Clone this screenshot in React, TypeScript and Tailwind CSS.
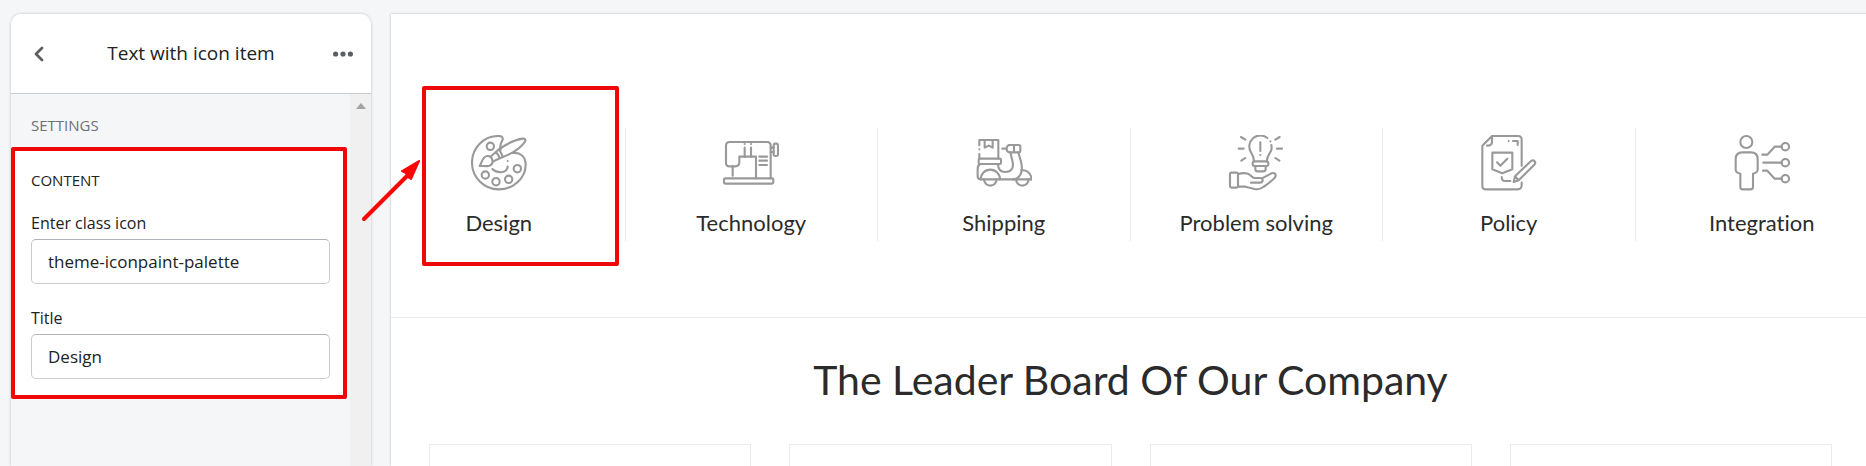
import type { ReactNode } from "react";

const features: { title: string; icon: ReactNode; highlighted?: boolean }[] = [
  {
    title: "Design",
    highlighted: true,
    icon: (
      <>
        <path d="M89 44C84 32 91 24 95 14C97 6 91 3 82 3C38 3 3 38 3 83C3 127 39 163 83 163C128 163 164 128 164 90C164 64 148 52 126 54" />
        <path d="M84 43C104 29 130 14 155 11C163 10 166 15 160 23C143 45 118 58 95 66" />
        <path d="M60 64L84 43Q92 54 95 66L65 80M75 51Q83 60 86 70" />
        <path d="M26 93C33 84 34 63 49 63C65 63 70 84 58 91C50 96 37 92 26 93Z" />
        <circle cx="58" cy="34" r="11" />
        <circle cx="43" cy="120" r="11" />
        <circle cx="75" cy="140" r="11" />
        <circle cx="113" cy="133" r="11" />
        <circle cx="139" cy="101" r="11" />
        <path d="M64 102C78 116 108 116 110 95M110 78V78.1" />
      </>
    ),
  },
  {
    title: "Technology",
    icon: (
      <>
        <path d="M143 130V32Q143 21 132 21H20Q9 21 9 32V83Q9 94 20 94H37Q49 94 49 82V65H99V130" />
        <rect x="3" y="130" width="148" height="16" rx="4" />
        <path d="M29 94V122M65 38V65M84 38V65M65 27V27.1M84 27V27.1M109 65H132M109 77H132M109 90H132" />
        <rect x="152" y="26" width="13" height="37" rx="5" />
        <path d="M143 38H152M143 51H152" />
      </>
    ),
  },
  {
    title: "Shipping",
    icon: (
      <>
        <path d="M10 31V15H67V71M10 57V71M10 43V43.1M26 15V38L38 32L50 38V15" />
        <rect x="8" y="71" width="67" height="16" rx="4" />
        <path d="M13 87Q5 90 5 102V124Q5 133 14 133H167" />
        <path d="M14 133A29 29 0 0 1 72 133M24 133A19 19 0 0 0 62 133" />
        <path d="M120 133A19 19 0 0 0 158 133M136 105Q163 105 167 133" />
        <path d="M66 87C66 103 75 111 88 111C108 111 113 96 110 82L103 52M127 52L136 84C141 110 134 132 110 133" />
        <path d="M98 30H128Q133 30 133 35V47Q133 52 128 52H104Q92 52 92 41Q92 30 102 30M114 30V52M79 41H92" />
      </>
    ),
  },
  {
    title: "Problem solving",
    icon: (
      <>
        <path d="M118 9A33 33 0 0 0 69 52C75 62 78 67 78 79M116 79C117 67 120 62 126 53Q133 44 130 30M127 19V19.1" />
        <rect x="74" y="79" width="47" height="14" rx="6" />
        <path d="M82 93V102Q82 109 89 109H106Q113 109 113 102V93M97 22V48M97 60V60.1" />
        <path d="M39 6L52 14M32 41H47M40 77L52 69M155 6L142 14M162 41H147M154 77L142 69" />
        <rect x="6" y="113" width="24" height="45" rx="4" />
        <path d="M30 118Q45 112 60 116C69 119 71 128 80 129H96Q104 129 104 136Q104 143 96 143H69M102 130L130 115Q137 112 142 117Q145 123 139 130C126 142 119 148 106 156Q94 165 80 162L52 155H30" />
      </>
    ),
  },
  {
    title: "Policy",
    icon: (
      <>
        <path d="M122 92V14Q122 3 111 3H33L4 32V152Q4 163 15 163H110Q122 163 122 150V143M33 4V20Q33 32 18 32" />
        <path d="M34 53H94V103L64 115L34 103ZM48 82L58 92L79 71" />
        <path d="M83 18V18.1M96 18H110V30M62 126Q62 138 72 138H88" />
        <path d="M98 141L102 124L150 78Q156 74 161 79Q165 84 160 89L113 136ZM102 124L113 136" />
      </>
    ),
  },
  {
    title: "Integration",
    icon: (
      <>
        <circle cx="37" cy="21" r="18" />
        <path d="M25 52H51Q71 52 71 72V104Q71 112 57 116V156Q57 163 50 163H26Q19 163 19 156V116Q5 112 5 104V72Q5 52 25 52Z" />
        <circle cx="154" cy="35" r="11" />
        <circle cx="154" cy="83" r="11" />
        <circle cx="154" cy="131" r="11" />
        <path d="M85 59H100L122 35H143M88 83H143M87 107H100L122 131H143" />
      </>
    ),
  },
];

function Field({ id, label, value }: { id: string; label: string; value: string }) {
  return (
    <div>
      <label htmlFor={id} className="block text-base leading-6 text-[#202223]">
        {label}
      </label>
      <input
        id={id}
        type="text"
        defaultValue={value}
        className="mt-1 block h-[45px] w-full rounded-[5px] border border-[#c9cccf] border-t-[#aeb4b9] bg-white px-4 text-[17px] text-[#202223] outline-none"
      />
    </div>
  );
}

function SettingsPanel() {
  return (
    <aside className="relative flex w-[360px] shrink-0 flex-col rounded-t-[10px] bg-[#f4f6f8] shadow-[0_0_3px_rgba(23,24,24,0.25)]">
      <header className="flex h-20 shrink-0 items-center justify-between rounded-t-[10px] border-b border-[#c9cccf] bg-white px-4">
        <button type="button" aria-label="Back" className="flex size-6 items-center justify-center text-[#5c5f62]">
          <svg viewBox="0 0 10 16" className="h-4 w-[10px]" fill="none" stroke="currentColor" strokeWidth="2.8" strokeLinecap="round" strokeLinejoin="round">
            <path d="M8 2L2 8L8 14" />
          </svg>
        </button>
        <h1 className="text-[19px] text-[#202223]">Text with icon item</h1>
        <button type="button" aria-label="More actions" className="flex size-6 items-center justify-center text-[#5c5f62]">
          <svg viewBox="0 0 20 6" className="h-[6px] w-5" fill="currentColor">
            <circle cx="2.6" cy="3" r="2.6" />
            <circle cx="10" cy="3" r="2.6" />
            <circle cx="17.4" cy="3" r="2.6" />
          </svg>
        </button>
      </header>
      <div className="flex flex-1">
        <div className="flex-1">
          <h2 className="px-5 pt-[21px] pb-3 text-[15px] leading-5 font-medium text-[#6d7175]">SETTINGS</h2>
          <section className="mr-[3px] rounded-[2px] border-4 border-[#f00808] bg-white pt-[19px] pr-[13px] pb-4 pl-4">
            <h3 className="text-[15px] leading-5 font-medium text-[#202223]">CONTENT</h3>
            <div className="mt-[21px] flex flex-col gap-[22px]">
              <Field id="icon-class" label="Enter class icon" value="theme-iconpaint-palette" />
              <Field id="item-title" label="Title" value="Design" />
            </div>
          </section>
        </div>
        <div className="flex w-[21px] justify-center bg-[#f0f0f0] pt-[9px]">
          <svg viewBox="0 0 10 6" className="h-[6px] w-[10px]" fill="#a3a3a3">
            <path d="M0 6L5 0L10 6Z" />
          </svg>
        </div>
      </div>
      <svg viewBox="0 0 60 64" className="absolute top-[145px] left-[350px] z-10 h-16 w-[60px]" fill="#f80808">
        <path d="M3 60L46 17" stroke="#f80808" strokeWidth="4" strokeLinecap="round" />
        <path d="M58 2L42 12L45 15L48 18L50 19Z" stroke="#f80808" strokeLinejoin="round" />
        <path d="M58 2L41 12L45 14L47 18L50 20Z" stroke="#f80808" strokeWidth="2" strokeLinejoin="round" />
      </svg>
    </aside>
  );
}

export default function App() {
  return (
    <div className="flex h-screen gap-5 overflow-hidden bg-[#f4f6f8] pt-[14px] pl-[11px] font-['Open_Sans',sans-serif]">
      <SettingsPanel />
      <main className="-mr-1 flex min-w-0 flex-1 flex-col bg-white font-[Lato,sans-serif] text-[#2b2b2b] shadow-[0_0_2px_rgba(23,24,24,0.3)] [font-variant-ligatures:none]">
        <section className="overflow-hidden border-b border-[#ebebeb] pt-[71px] pb-[72px]">
          <ul className="-mx-[18px] grid grid-cols-6 pt-[43px] pb-1">
            {features.map((f) => (
              <li key={f.title} className="relative flex h-[113px] flex-col items-center border-r border-[#ebebeb] pt-[7px] last:border-r-0">
                <svg viewBox="0 0 168 168" className="size-14 shrink-0" fill="none" stroke="#999" strokeWidth="6.3" strokeLinecap="round" strokeLinejoin="round" aria-hidden="true">
                  {f.icon}
                </svg>
                <p className="mt-4 text-[22px] leading-8">{f.title}</p>
                {f.highlighted && (
                  <span className="absolute -top-[42px] right-[6px] -bottom-[25px] left-[49px] rounded-[2px] border-4 border-[#f00808]" />
                )}
              </li>
            ))}
          </ul>
        </section>
        <section className="flex flex-1 flex-col px-[38px] pt-8">
          <h2 className="text-center text-[41px] leading-[60px]">The Leader Board Of Our Company</h2>
          <div className="mt-[34px] grid flex-1 grid-cols-4 gap-[38px]">
            <article className="border border-b-0 border-[#ebebeb]" />
            <article className="border border-b-0 border-[#ebebeb]" />
            <article className="border border-b-0 border-[#ebebeb]" />
            <article className="border border-b-0 border-[#ebebeb]" />
          </div>
        </section>
      </main>
    </div>
  );
}
